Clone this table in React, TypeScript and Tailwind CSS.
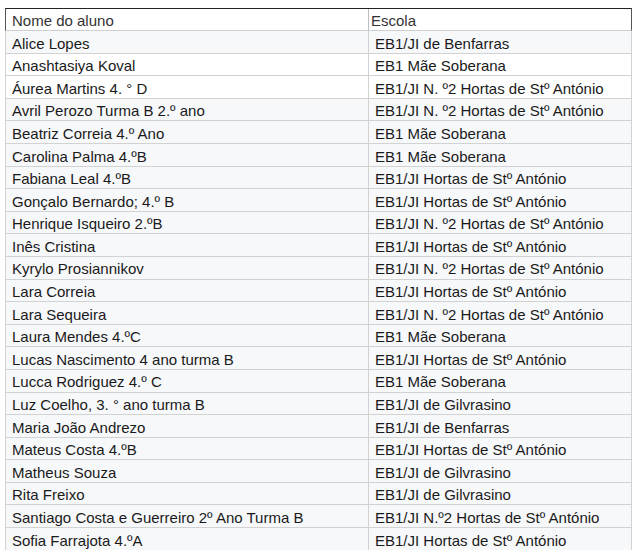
const alunos: [string, string][] = [
  ["Alice Lopes", "EB1/JI de Benfarras"],
  ["Anashtasiya Koval", "EB1 Mãe Soberana"],
  ["Áurea Martins 4. ° D", "EB1/JI N. º2 Hortas de Stº António"],
  ["Avril Perozo Turma B 2.º ano", "EB1/JI N. º2 Hortas de Stº António"],
  ["Beatriz Correia 4.º Ano", "EB1 Mãe Soberana"],
  ["Carolina Palma 4.ºB", "EB1 Mãe Soberana"],
  ["Fabiana Leal 4.ºB", "EB1/JI Hortas de Stº António"],
  ["Gonçalo Bernardo; 4.º B", "EB1/JI Hortas de Stº António"],
  ["Henrique Isqueiro 2.ºB", "EB1/JI N. º2 Hortas de Stº António"],
  ["Inês Cristina", "EB1/JI Hortas de Stº António"],
  ["Kyrylo Prosiannikov", "EB1/JI N. º2 Hortas de Stº António"],
  ["Lara Correia", "EB1/JI Hortas de Stº António"],
  ["Lara Sequeira", "EB1/JI N. º2 Hortas de Stº António"],
  ["Laura Mendes 4.ºC", "EB1 Mãe Soberana"],
  ["Lucas Nascimento 4 ano turma B", "EB1/JI Hortas de Stº António"],
  ["Lucca Rodriguez 4.º C", "EB1 Mãe Soberana"],
  ["Luz Coelho, 3. ° ano turma B", "EB1/JI de Gilvrasino"],
  ["Maria João Andrezo", "EB1/JI de Benfarras"],
  ["Mateus Costa 4.ºB", "EB1/JI Hortas de Stº António"],
  ["Matheus Souza", "EB1/JI de Gilvrasino"],
  ["Rita Freixo", "EB1/JI de Gilvrasino"],
  ["Santiago Costa e Guerreiro 2º Ano Turma B", "EB1/JI N.º2 Hortas de Stº António"],
  ["Sofia Farrajota 4.ºA", "EB1/JI Hortas de Stº António"],
];

// rows that look white in the screenshot, the rest have a faint grey fill
const brancas = new Set([1, 2]);

export default function App() {
  return (
    <div className="h-[550px] w-[640px] overflow-hidden bg-white pl-[5px] pt-[8px] font-['Liberation_Sans',Arial,sans-serif] text-[15px] text-[#1a1a1a]">
      <div className="w-[627px]">
        {/* Header */}
        <div className="flex h-[23px] border-x border-t border-b border-x-[#555] border-t-[#222] border-b-[#cfcfcf] text-[#333]">
          <div className="flex w-[363px] items-center border-r border-[#bdbdbd] pl-[6px] pt-[3px]">Nome do aluno</div>
          <div className="flex flex-1 items-center pl-[2px] pt-[3px]">Escola</div>
        </div>

        {/* Rows */}
        {alunos.map(([nome, escola], i) => (
          <div
            key={i}
            className={`flex h-[22.6px] border-x border-b border-[#d2d2d2] ${brancas.has(i) ? "bg-white" : "bg-[#f7f8fa]"}`}
          >
            <div className="flex w-[363px] items-center whitespace-nowrap border-r border-[#d2d2d2] pl-[6px] pt-[4px]">{nome}</div>
            <div className="flex flex-1 items-center whitespace-nowrap pl-[6px] pt-[4px]">{escola}</div>
          </div>
        ))}
      </div>
    </div>
  );
}
